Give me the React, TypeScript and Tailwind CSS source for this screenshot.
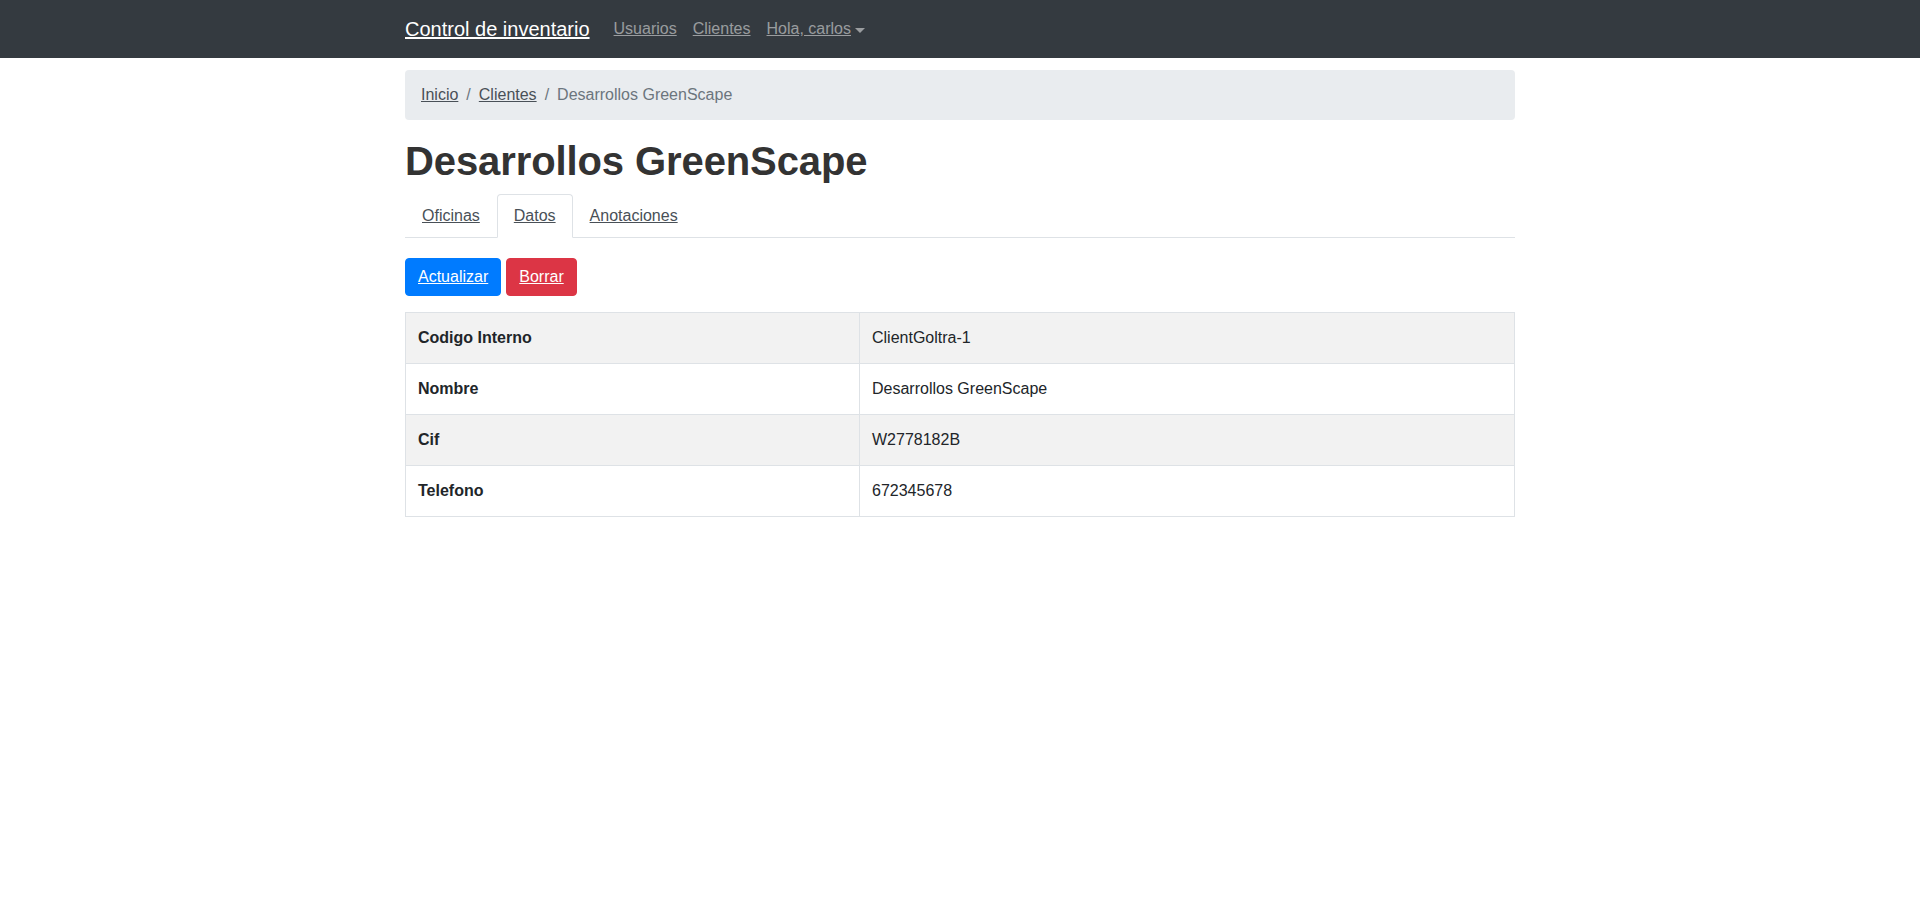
import React from "react";

const rows = [
  { label: "Codigo Interno", value: "ClientGoltra-1" },
  { label: "Nombre", value: "Desarrollos GreenScape" },
  { label: "Cif", value: "W2778182B" },
  { label: "Telefono", value: "672345678" },
];

export default function App() {
  return (
    <div className="min-h-screen bg-white text-[#212529] font-['Liberation_Sans',Arial,sans-serif] text-[16px] leading-6">
      <nav className="bg-[#343a40] h-[58px]">
        <div className="w-[1140px] mx-auto px-[15px] h-full flex items-center">
          <a href="#" className="text-white text-[20px] leading-[30px] underline mr-4">
            Control de inventario
          </a>
          <a href="#" className="px-2 text-[#ffffff80] underline">Usuarios</a>
          <a href="#" className="px-2 text-[#ffffff80] underline">Clientes</a>
          <a href="#" className="px-2 text-[#ffffff80] flex items-center">
            <span className="underline">Hola, carlos</span>
            <span className="ml-[4px] mt-[2px] w-0 h-0 border-l-[5px] border-r-[5px] border-t-[5px] border-l-transparent border-r-transparent border-t-[#ffffff80]"></span>
          </a>
        </div>
      </nav>

      <main className="w-[1140px] mx-auto px-[15px]">
        <div className="mt-[12px] h-[50px] px-4 flex items-center rounded bg-[#e9ecef]">
          <a href="#" className="text-[#495057] underline">Inicio</a>
          <span className="px-2 text-[#6c757d]">/</span>
          <a href="#" className="text-[#495057] underline">Clientes</a>
          <span className="px-2 text-[#6c757d]">/</span>
          <span className="text-[#6c757d]">Desarrollos GreenScape</span>
        </div>

        <h1 className="mt-[17px] mb-[9px] text-[40px] leading-[48px] font-bold text-[#333333] tracking-[-0.1px]">
          Desarrollos GreenScape
        </h1>

        <div className="flex border-b border-[#dee2e6] h-[44px]">
          <a href="#" className="px-4 pt-[9px] pb-[7px] border border-transparent text-[#495057] underline h-[43px]">
            Oficinas
          </a>
          <a
            href="#"
            className="px-4 pt-[9px] pb-[7px] border border-[#dee2e6] border-b-white rounded-t bg-white text-[#495057] underline h-[44px] -mb-px"
          >
            Datos
          </a>
          <a href="#" className="px-4 pt-[9px] pb-[7px] border border-transparent text-[#495057] underline h-[43px]">
            Anotaciones
          </a>
        </div>

        <div className="mt-[20px] flex gap-[5px]">
          <a href="#" className="h-[38px] px-3 flex items-center rounded bg-[#007bff] border border-[#007bff] text-white underline">
            Actualizar
          </a>
          <a href="#" className="h-[38px] px-3 flex items-center rounded bg-[#dc3545] border border-[#dc3545] text-white underline">
            Borrar
          </a>
        </div>

        <div className="mt-4 border border-[#dee2e6]">
          {rows.map((r, i) => (
            <div
              key={r.label}
              className={
                "flex h-[50px] " +
                (i > 0 ? "border-t border-[#dee2e6] h-[51px] " : "") +
                (i % 2 === 0 ? "bg-[#f2f2f2]" : "bg-white")
              }
            >
              <div className="w-[454px] px-3 flex items-center font-bold border-r border-[#dee2e6]">
                {r.label}
              </div>
              <div className="flex-1 px-3 flex items-center">{r.value}</div>
            </div>
          ))}
        </div>
      </main>
    </div>
  );
}
